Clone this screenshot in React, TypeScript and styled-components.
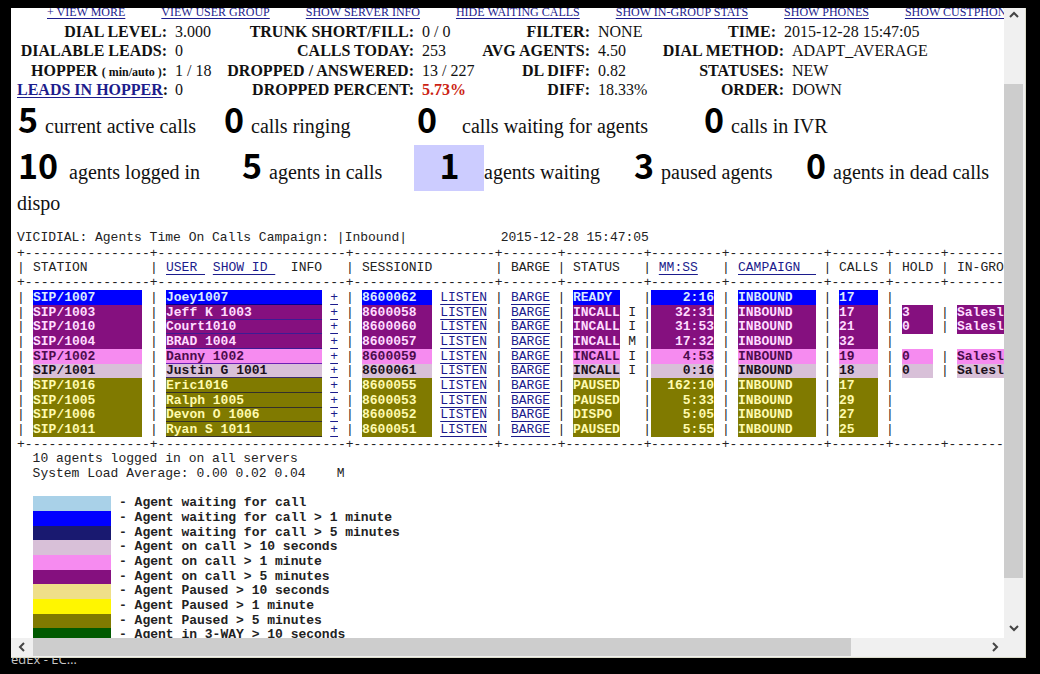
import React from "react";
import styled, { createGlobalStyle, css } from "styled-components";

const serif = `"Liberation Serif", "Times New Roman", serif`;
const mono = `"Liberation Mono", "Courier New", monospace`;
const navy = "#1c1c8c";

const GlobalStyle = createGlobalStyle`
  * { box-sizing: border-box; }
  body { margin: 0; background: #000; color: #111; font-family: ${serif}; }
  a { color: ${navy}; }
`;

const Screen = styled.div`
  display: flex;
  flex-direction: column;
  height: 100vh;
  padding: 8px 14px 0 11px;
  overflow: hidden;
`;

const BrowserFrame = styled.div`
  flex: 1;
  min-height: 0;
  display: flex;
  flex-direction: column;
  background: #f0f0f0;
  border-right: 1px solid #dcdccb;
  border-bottom: 1px solid #dcdccb;
`;

const Upper = styled.div`
  flex: 1;
  min-height: 0;
  display: flex;
`;

const Viewport = styled.main`
  flex: 1;
  min-width: 0;
  overflow: hidden;
  background: #fff;
`;

const Report = styled.div`
  margin-top: -3px;
  padding-left: 6px;
`;

const Taskbar = styled.footer`
  height: 16px;
  overflow: hidden;
  color: #c8c8c8;
  font-family: "Open Sans", sans-serif;
  font-size: 13px;
  line-height: 2px;
`;

/* Scroll bars */

const VerticalBar = styled.div`
  width: 21px;
  display: flex;
  flex-direction: column;
  padding-right: 2px;
`;

const HorizontalBar = styled.div`
  height: 19px;
  display: flex;
  padding: 0 20px 1px 0;
`;

const ScrollButton = styled.button`
  flex: 0 0 20px;
  display: flex;
  align-items: center;
  justify-content: center;
  padding: 0;
  border: 0;
  background: transparent;
  &:first-child { flex-basis: 14px; }
  ${HorizontalBar} &:first-child { flex-basis: 22px; }
`;

const Track = styled.div<{ $grow: number; $thumb?: boolean }>`
  flex: ${(p) => p.$grow} 1 0;
  background: ${(p) => (p.$thumb ? "#cdcdcd" : "transparent")};
`;

function Chevron({ d }: { d: string }) {
  return (
    <svg width="10" height="10" viewBox="0 0 10 10" fill="none" stroke="#444" strokeWidth="2">
      <path d={d} />
    </svg>
  );
}

/* Top links and statistics */

const LinkBar = styled.nav`
  display: flex;
  gap: 36px;
  padding-left: 30px;
  font-size: 12px;
  line-height: 14px;
  white-space: nowrap;
  a { text-underline-offset: 2px; }
`;

const StatsTable = styled.table`
  margin-top: 2px;
  width: 960px;
  table-layout: fixed;
  border-collapse: collapse;
  font-size: 16px;
  line-height: 19px;
  white-space: nowrap;
  th, td { padding: 0; height: 19px; }
  tr:nth-child(odd) > * { height: 20px; }
  a { text-underline-offset: 2px; }
`;

const StatLabel = styled.th<{ $inset?: boolean }>`
  text-align: right;
  && { padding-right: ${(p) => (p.$inset ? 8 : 0)}px; }
`;

const StatValue = styled.td<{ $flush?: boolean; $alert?: boolean }>`
  && { padding-left: ${(p) => (p.$flush ? 0 : 8)}px; }
  ${(p) => p.$alert && css`color: #cc1f14; font-weight: bold;`}
`;

const Small = styled.span`
  font-size: 12px;
  line-height: 1;
`;

/* Big counters */

const CounterRow = styled.div<{ $columns: string }>`
  display: grid;
  grid-template-columns: ${(p) => p.$columns};
  height: 46px;
  font-size: 20px;
  line-height: 40px;
  white-space: nowrap;
`;

const Counter = styled.div`
  display: flex;
  align-items: baseline;
`;

const CounterValue = styled.strong<{ $width: number; $highlight?: boolean }>`
  flex: 0 0 ${(p) => p.$width}px;
  padding: 0 0 6px 1px;
  color: #000;
  font: bold 34px/40px "Noto Sans CJK JP", sans-serif;
  ${(p) => p.$highlight && css`background: #ccccff; text-align: center;`}
`;

const Wrapped = styled.div`
  font-size: 20px;
  line-height: 24px;
  height: 40px;
`;

/* Agent listing */

const Listing = styled.section`
  font-family: ${mono};
  font-size: 13px;
  line-height: 14px;
  color: #222;
  white-space: pre;
`;

const Line = styled.div`
  height: 15px;
  &:empty { height: 14px; }
`;

const AgentTable = styled.table`
  width: 1040px;
  table-layout: fixed;
  border-collapse: collapse;
  th, td { padding: 0; height: 15px; font-weight: normal; text-align: left; }
  tbody tr:nth-child(3n) > *, thead tr:nth-child(2) > * { height: 14px; }
  a { text-decoration-thickness: 1px; text-underline-offset: 3px; }
`;

type Tone = "blue" | "purple" | "violet" | "thistle" | "olive";
const tones: Record<Tone, { bg: string; fg: string; line: string }> = {
  blue: { bg: "#0000ff", fg: "#dcecff", line: "#00008b" },
  purple: { bg: "#85107f", fg: "#ffdcff", line: "#3c1c94" },
  violet: { bg: "#f68bf0", fg: "#4c0b4c", line: "#6d20b4" },
  thistle: { bg: "#d8c0d8", fg: "#1c101c", line: "#3b2b6c" },
  olive: { bg: "#807a00", fg: "#fffbb0", line: "#33302b" },
};

const Tinted = styled.td<{ $tone: Tone; $right?: boolean }>`
  && {
    background: ${(p) => tones[p.$tone].bg};
    color: ${(p) => tones[p.$tone].fg};
    font-weight: bold;
    text-align: ${(p) => (p.$right ? "right" : "left")};
  }
  a { color: inherit; text-decoration-color: ${(p) => tones[p.$tone].line}; }
`;

const Bar = styled.td<{ $align?: string }>`
  && { text-align: ${(p) => p.$align ?? "center"}; }
`;

const RightCell = styled.td`
  && { text-align: right; }
`;

const RuleCell = styled.td<{ $right: boolean }>`
  && { text-align: ${(p) => (p.$right ? "right" : "left")}; }
`;

const Legend = styled.ul`
  margin: 0;
  padding: 0 0 0 16px;
  list-style: none;
`;

const LegendItem = styled.li`
  display: flex;
  gap: 8px;
  height: 15px;
  font-weight: bold;
  &:nth-child(3n) { height: 14px; }
`;

const Swatch = styled.span<{ $color: string }>`
  width: 78px;
  background: ${(p) => p.$color};
`;

const widths = [16, 109, 24, 156, 16, 24, 70, 55, 24, 39, 23, 47, 16, 15, 63, 24, 78, 23, 39, 24, 31, 24];
const ruleParts = [
  "+-", "-".repeat(14), "-+-", "-".repeat(20), "--", "-+-", "-".repeat(9), "-".repeat(7), "-+-",
  "-----", "-+-", "------", "--", "-+", "-".repeat(8), "-+-", "-".repeat(10), "-+-", "-----", "-+-",
  "----", "-+-", "-".repeat(16),
];
const rightRuleParts = [4, 7, 12, 13];

function Rule() {
  return (
    <tr aria-hidden>
      {ruleParts.map((part, i) => (
        <RuleCell key={i} $right={rightRuleParts.includes(i)}>{part}</RuleCell>
      ))}
    </tr>
  );
}

interface Agent {
  station: string; user: string; session: string; status: string; flag: string;
  time: string; calls: string; hold?: string; tone: Tone;
}

const agents: Agent[] = [
  { station: "1007", user: "Joey1007", session: "8600062", status: "READY", flag: "", time: "2:16", calls: "17", tone: "blue" },
  { station: "1003", user: "Jeff K 1003", session: "8600058", status: "INCALL", flag: "I", time: "32:31", calls: "17", hold: "3", tone: "purple" },
  { station: "1010", user: "Court1010", session: "8600060", status: "INCALL", flag: "I", time: "31:53", calls: "21", hold: "0", tone: "purple" },
  { station: "1004", user: "BRAD 1004", session: "8600057", status: "INCALL", flag: "M", time: "17:32", calls: "32", tone: "purple" },
  { station: "1002", user: "Danny 1002", session: "8600059", status: "INCALL", flag: "I", time: "4:53", calls: "19", hold: "0", tone: "violet" },
  { station: "1001", user: "Justin G 1001", session: "8600061", status: "INCALL", flag: "I", time: "0:16", calls: "18", hold: "0", tone: "thistle" },
  { station: "1016", user: "Eric1016", session: "8600055", status: "PAUSED", flag: "", time: "162:10", calls: "17", tone: "olive" },
  { station: "1005", user: "Ralph 1005", session: "8600053", status: "PAUSED", flag: "", time: "5:33", calls: "29", tone: "olive" },
  { station: "1006", user: "Devon O 1006", session: "8600052", status: "DISPO", flag: "", time: "5:05", calls: "27", tone: "olive" },
  { station: "1011", user: "Ryan S 1011", session: "8600051", status: "PAUSED", flag: "", time: "5:55", calls: "25", tone: "olive" },
];

const legend = [
  ["#a9d1e8", "Agent waiting for call"],
  ["#0000ff", "Agent waiting for call > 1 minute"],
  ["#191970", "Agent waiting for call > 5 minutes"],
  ["#d8c0d8", "Agent on call > 10 seconds"],
  ["#f68bf0", "Agent on call > 1 minute"],
  ["#85107f", "Agent on call > 5 minutes"],
  ["#efdf88", "Agent Paused > 10 seconds"],
  ["#fff600", "Agent Paused > 1 minute"],
  ["#807a00", "Agent Paused > 5 minutes"],
  ["#005a00", "Agent in 3-WAY > 10 seconds"],
];

const topLinks = [
  "+ VIEW MORE", "VIEW USER GROUP", "SHOW SERVER INFO", "HIDE WAITING CALLS",
  "SHOW IN-GROUP STATS", "SHOW PHONES", "SHOW CUSTPHONES",
];

function AgentRow({ a }: { a: Agent }) {
  return (
    <tr>
      <Bar $align="left">|</Bar>
      <Tinted $tone={a.tone}>SIP/{a.station}</Tinted>
      <Bar>|</Bar>
      <Tinted $tone={a.tone}><a href="#user">{a.user.padEnd(20)}</a></Tinted>
      <RightCell><a href="#info">+</a></RightCell>
      <Bar>|</Bar>
      <Tinted $tone={a.tone}>{a.session}</Tinted>
      <RightCell><a href="#listen">LISTEN</a></RightCell>
      <Bar>|</Bar>
      <td><a href="#barge">BARGE</a></td>
      <Bar>|</Bar>
      <Tinted $tone={a.tone}>{a.status}</Tinted>
      <RightCell>{a.flag}</RightCell>
      <Bar $align="right">|</Bar>
      <Tinted $tone={a.tone} $right>{a.time}</Tinted>
      <Bar>|</Bar>
      <Tinted $tone={a.tone}>INBOUND</Tinted>
      <Bar>|</Bar>
      <Tinted $tone={a.tone}>{a.calls}</Tinted>
      <Bar>|</Bar>
      {a.hold && (
        <>
          <Tinted $tone={a.tone}>{a.hold}</Tinted>
          <Bar>|</Bar>
          <Tinted $tone={a.tone}>Salesline</Tinted>
        </>
      )}
    </tr>
  );
}

export default function App() {
  return (
    <Screen>
      <GlobalStyle />
      <BrowserFrame>
        <Upper>
          <Viewport>
            <Report>
              <LinkBar>
                {topLinks.map((t) => <a key={t} href="#option">{t}</a>)}
              </LinkBar>
              <StatsTable>
                <colgroup>
                  {[150, 50, 197, 66, 110, 65, 129].map((w, i) => <col key={i} style={{ width: w }} />)}
                  <col />
                </colgroup>
                <tbody>
                  <tr>
                    <StatLabel>DIAL LEVEL:</StatLabel><StatValue>3.000</StatValue>
                    <StatLabel>TRUNK SHORT/FILL:</StatLabel><StatValue>0 / 0</StatValue>
                    <StatLabel>FILTER:</StatLabel><StatValue>NONE</StatValue>
                    <StatLabel $inset>TIME:</StatLabel><StatValue $flush>2015-12-28 15:47:05</StatValue>
                  </tr>
                  <tr>
                    <StatLabel>DIALABLE LEADS:</StatLabel><StatValue>0</StatValue>
                    <StatLabel>CALLS TODAY:</StatLabel><StatValue>253</StatValue>
                    <StatLabel>AVG AGENTS:</StatLabel><StatValue>4.50</StatValue>
                    <StatLabel>DIAL METHOD:</StatLabel><StatValue>ADAPT_AVERAGE</StatValue>
                  </tr>
                  <tr>
                    <StatLabel>HOPPER <Small>( min/auto )</Small>:</StatLabel><StatValue>1 / 18</StatValue>
                    <StatLabel>DROPPED / ANSWERED:</StatLabel><StatValue>13 / 227</StatValue>
                    <StatLabel>DL DIFF:</StatLabel><StatValue>0.82</StatValue>
                    <StatLabel>STATUSES:</StatLabel><StatValue>NEW</StatValue>
                  </tr>
                  <tr>
                    <StatLabel><a href="#hopper">LEADS IN HOPPER</a>:</StatLabel><StatValue>0</StatValue>
                    <StatLabel>DROPPED PERCENT:</StatLabel><StatValue $alert>5.73%</StatValue>
                    <StatLabel>DIFF:</StatLabel><StatValue>18.33%</StatValue>
                    <StatLabel>ORDER:</StatLabel><StatValue>DOWN</StatValue>
                  </tr>
                </tbody>
              </StatsTable>

              <CounterRow $columns="206px 193px 287px auto">
                <Counter><CounterValue $width={28}>5</CounterValue>current active calls</Counter>
                <Counter><CounterValue $width={28}>0</CounterValue>calls ringing</Counter>
                <Counter><CounterValue $width={46}>0</CounterValue>calls waiting for agents</Counter>
                <Counter><CounterValue $width={28}>0</CounterValue>calls in IVR</Counter>
              </CounterRow>
              <CounterRow $columns="224px 173px 219px 172px auto">
                <Counter><CounterValue $width={52}>10</CounterValue>agents logged in</Counter>
                <Counter><CounterValue $width={28}>5</CounterValue>agents in calls</Counter>
                <Counter><CounterValue $width={70} $highlight>1</CounterValue>agents waiting</Counter>
                <Counter><CounterValue $width={28}>3</CounterValue>paused agents</Counter>
                <Counter><CounterValue $width={28}>0</CounterValue>agents in dead calls</Counter>
              </CounterRow>
              <Wrapped>dispo</Wrapped>

              <Listing>
                <Line>{"VICIDIAL: Agents Time On Calls Campaign: |Inbound|" + " ".repeat(12) + "2015-12-28 15:47:05"}</Line>
                <AgentTable>
                  <colgroup>
                    {widths.map((w, i) => <col key={i} style={{ width: w }} />)}
                    <col />
                  </colgroup>
                  <thead>
                    <Rule />
                    <tr>
                      <Bar $align="left">|</Bar>
                      <th>STATION</th>
                      <Bar>|</Bar>
                      <th colSpan={2}><a href="#user">{"USER "}</a>{" "}<a href="#id">{"SHOW ID "}</a>{"  INFO"}</th>
                      <Bar>|</Bar>
                      <th colSpan={2}>SESSIONID</th>
                      <Bar>|</Bar>
                      <th>BARGE</th>
                      <Bar>|</Bar>
                      <th colSpan={2}>STATUS</th>
                      <Bar $align="right">|</Bar>
                      <th>{" "}<a href="#time">MM:SS</a></th>
                      <Bar>|</Bar>
                      <th><a href="#campaign">{"CAMPAIGN  "}</a></th>
                      <Bar>|</Bar>
                      <th>CALLS</th>
                      <Bar>|</Bar>
                      <th>HOLD</th>
                      <Bar>|</Bar>
                      <th>IN-GROUP</th>
                    </tr>
                    <Rule />
                  </thead>
                  <tbody>
                    {agents.map((a) => <AgentRow key={a.station} a={a} />)}
                    <Rule />
                  </tbody>
                </AgentTable>
                <Line>{"  10 agents logged in on all servers"}</Line>
                <Line>{"  System Load Average: 0.00 0.02 0.04    M"}</Line>
                <Line />
                <Legend>
                  {legend.map(([color, text]) => (
                    <LegendItem key={text}><Swatch $color={color} />- {text}</LegendItem>
                  ))}
                </Legend>
              </Listing>
            </Report>
          </Viewport>
          <VerticalBar>
            <ScrollButton aria-label="Scroll up"><Chevron d="M1 7 L5 3 L9 7" /></ScrollButton>
            <Track $grow={62} />
            <Track $grow={494} $thumb />
            <Track $grow={40} />
            <ScrollButton aria-label="Scroll down"><Chevron d="M1 3 L5 7 L9 3" /></ScrollButton>
          </VerticalBar>
        </Upper>
        <HorizontalBar>
          <ScrollButton aria-label="Scroll left"><Chevron d="M7 1 L3 5 L7 9" /></ScrollButton>
          <Track $grow={817} $thumb />
          <Track $grow={134} />
          <ScrollButton aria-label="Scroll right"><Chevron d="M3 1 L7 5 L3 9" /></ScrollButton>
        </HorizontalBar>
      </BrowserFrame>
      <Taskbar>edEx - EC…</Taskbar>
    </Screen>
  );
}
